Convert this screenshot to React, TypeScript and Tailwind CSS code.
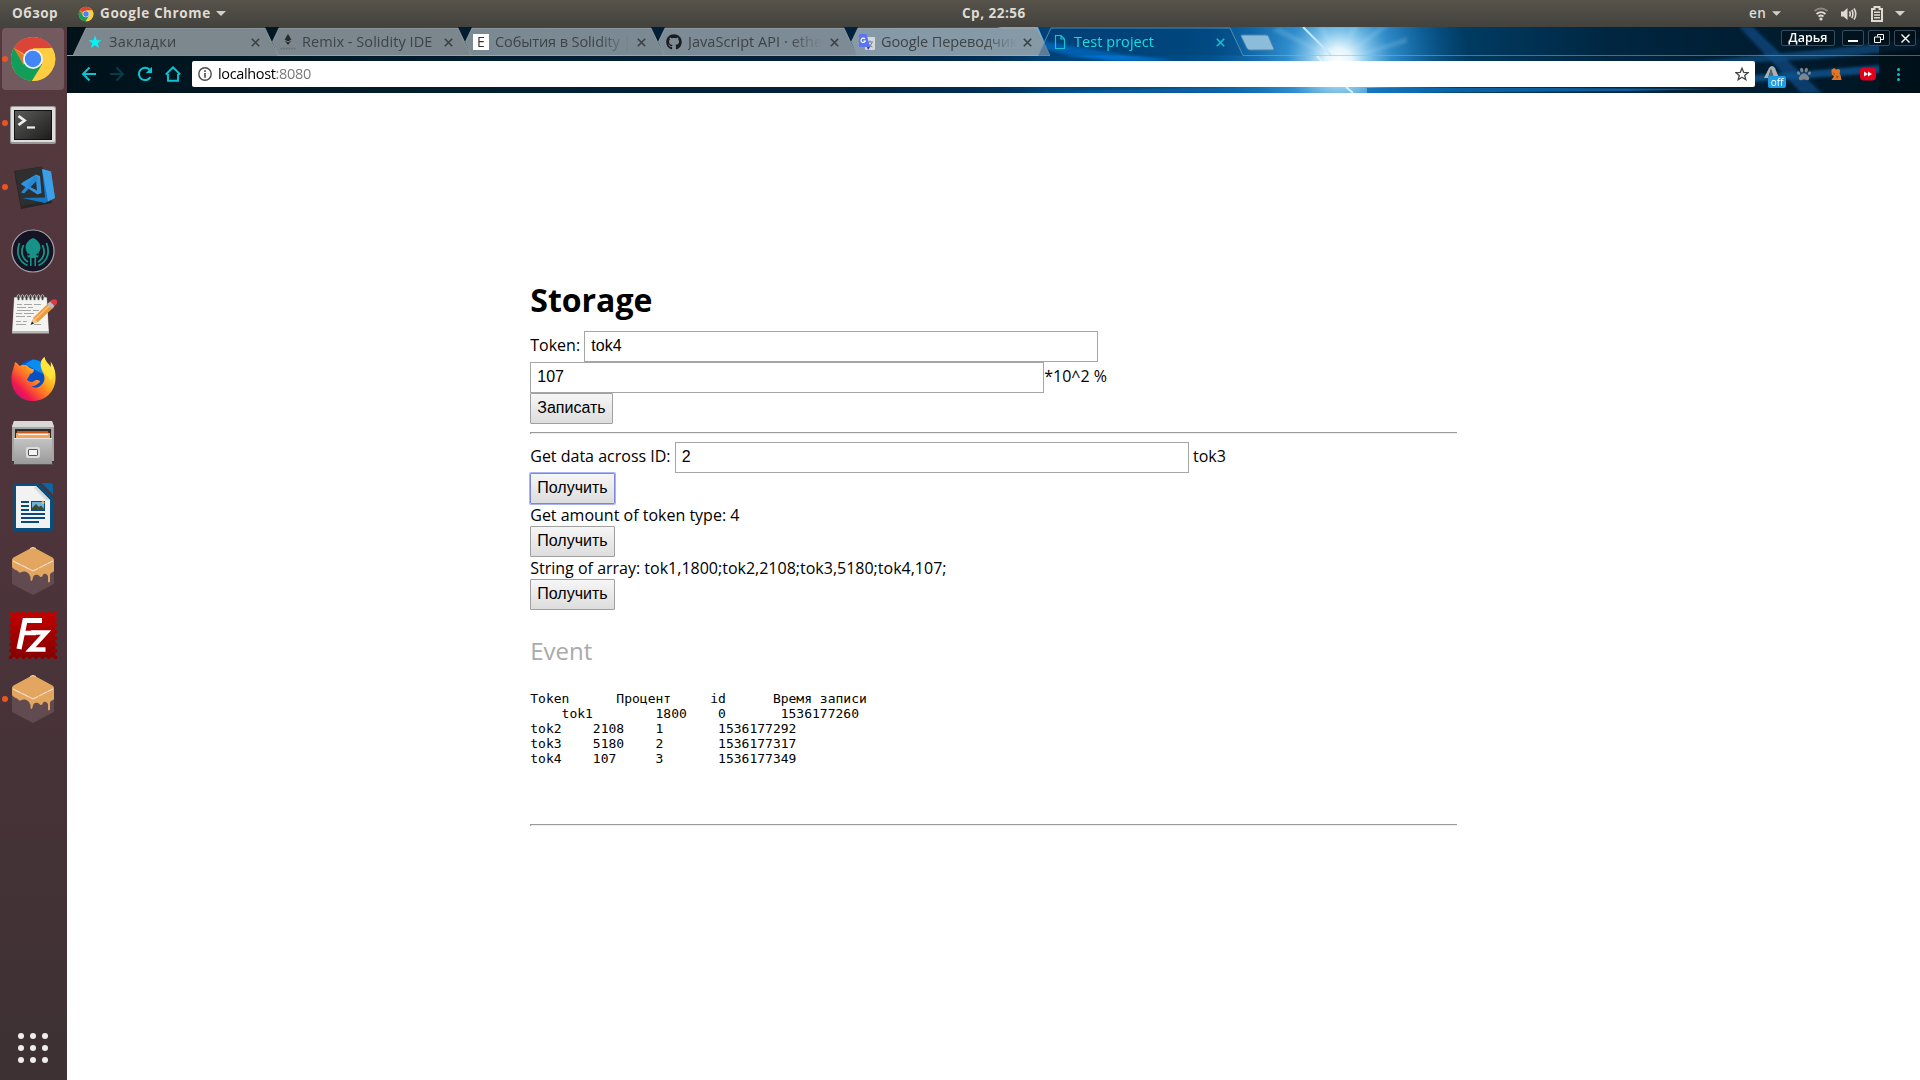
import React from "react";
import { FaGithub, FaPaw } from "react-icons/fa";

const ui = "font-['Open_Sans','Noto_Sans',sans-serif]";

function ChromeLogo({ className }: { className: string }) {
  return (
    <svg viewBox="0 0 48 48" className={className}>
      <circle cx="24" cy="24" r="22" fill="#f9c93c" />
      <path d="M24 24 L4.9 13 A22 22 0 0 1 43.1 13 L24 13.5 Z" fill="#db4437" />
      <path d="M4.9 13 A22 22 0 0 0 23 46 L33.4 29 L24 24 L14.5 29.5 Z" fill="#129d58" />
      <path d="M24 13.5 H43.6 A22 22 0 0 1 23 46 L33.5 29 Z" fill="#ffcd40" />
      <path d="M4.9 13 L14.6 29.5 L15 20 Z" fill="#c53929" opacity=".55" />
      <circle cx="24" cy="24" r="10" fill="#f1f1f1" />
      <circle cx="24" cy="24" r="8.2" fill="#4285f4" />
    </svg>
  );
}

function Terminal() {
  return (
    <svg viewBox="0 0 48 48" className="size-12">
      <defs>
        <linearGradient id="term" x1="0" y1="0" x2="1" y2="1">
          <stop offset="0" stopColor="#5b5b59" />
          <stop offset=".5" stopColor="#3c3d3b" />
          <stop offset="1" stopColor="#1c1d1c" />
        </linearGradient>
      </defs>
      <rect x="1" y="7" width="46" height="38" rx="2" fill="#989898" />
      <rect x="2" y="8" width="44" height="35" rx="1.5" fill="#dedede" />
      <rect x="5" y="11" width="38" height="30" fill="#111" />
      <rect x="6" y="12" width="36" height="28" fill="url(#term)" />
      <path d="M9.500 17 L15.500 21.500 L9.500 26" fill="none" stroke="#eee" strokeWidth="2.800" />
      <path d="M18 28.500 H26" stroke="#eee" strokeWidth="2.200" />
    </svg>
  );
}

function Code() {
  return (
    <svg viewBox="0 0 48 48" className="size-12">
      <path d="M5 8 L33 3.500 L43 40 L12 46 Z" fill="#262626" />
      <path d="M6 8 L33 3.800 L42 37 L12 43 Z" fill="#2f2f30" />
      <path d="M33 6 L42 8.500 L46 35 L36 40 L13 35 L36 34.500 Z" fill="#1477c2" />
      <path d="M33 6 L42 8.500 L46 35 L39 38.500 Z" fill="#3d9fe6" />
      <path
        d="M27 11.500 L31 13 L32.500 30 L28.500 31.500 L12 21 L15 18.500 Z M27 17 L20.500 23.500 L28 27.500 Z"
        fill="#2f93df"
        fillRule="evenodd"
      />
      <path d="M12 29.500 L27 11.500 L28.500 17 L15 30.500 Z" fill="#2787d0" />
      <path d="M15 18.500 L16.500 20.500 L21 24 L18 25 L12 21 Z" fill="#2f93df" />
    </svg>
  );
}

function Kraken() {
  return (
    <svg viewBox="0 0 48 48" className="size-12">
      <circle cx="24" cy="24" r="21" fill="#141425" stroke="#a9a3a7" strokeWidth="1.200" />
      <path
        d="M24 11 C19 13 16.500 17 16.500 21 C16.500 24 19 25 18.500 28 C18 31 21 31 21 29.500 V39 H22.600 V31 H25.400 V39 H27 V29.500 C27 31 30 31 29.500 28 C29 25 31.500 24 31.500 21 C31.500 17 29 13 24 11 Z"
        fill="#179287"
      />
      <path
        d="M10.500 16 C7 25 9 34 18.500 38.500 M14.500 18 C11.500 25 13 31 19 35 M37.500 16 C41 25 39 34 29.500 38.500 M33.500 18 C36.500 25 35 31 29 35"
        fill="none"
        stroke="#179287"
        strokeWidth="1.800"
      />
      <circle cx="19.500" cy="27.500" r="1.100" fill="#141425" />
      <circle cx="28.500" cy="27.500" r="1.100" fill="#141425" />
    </svg>
  );
}

function Notes() {
  return (
    <svg viewBox="0 0 48 48" className="size-12">
      <g transform="translate(0 -1.500)">
        <path d="M5 8 H38 L40 44 H3 Z" fill="#b9b9b5" />
        <path d="M5.500 8 H37.500 L39.500 41.500 H3.500 Z" fill="#f4f4f2" />
        {[10, 14, 18, 22, 26, 30, 34].map((x) => (
          <ellipse key={x} cx={x - 0.5} cy="8" rx="1.500" ry="2.800" fill="#3a3a3a" stroke="#dadad8" strokeWidth=".8" />
        ))}
        <path
          d="M8 15 h5 m2 0 h8 m2 0 h7 M8 18 h9 m2 0 h5 M8 21 h14 m2 0 h6 M7 24 h6 m2 0 h10 M7 27 h9 m2 0 h4 M7 32 h5 m2 0 h4 M7 35 h10 m8 0 h7"
          stroke="#a6a6a3"
          strokeWidth="1"
        />
        <path d="M22 34.500 L24.500 28 L40 13 L45 17.500 L29 32.500 Z" fill="#f19a3a" />
        <path d="M26 30 L42 14.500" stroke="#ffc27c" strokeWidth="1.500" />
        <path d="M22 35 L24.500 28.500 L28.500 32.500 Z" fill="#e7c79c" />
        <path d="M21.500 35.500 L23 32 L25 34 Z" fill="#222" />
        <path d="M38.500 14.500 L41.500 11.500 L46 16 L43 19 Z" fill="#b5bcc2" />
        <path d="M41 12 C43 9 48 9 48 12 C48.500 14 47 15.500 45.500 16.500 Z" fill="#dd3a3f" />
      </g>
    </svg>
  );
}

function Firefox() {
  return (
    <svg viewBox="0 0 48 48" className="size-12">
      <defs>
        <linearGradient id="ff" x1=".85" y1=".1" x2=".1" y2=".85">
          <stop offset="0" stopColor="#fff44f" />
          <stop offset=".35" stopColor="#ffb01d" />
          <stop offset=".6" stopColor="#ff6a2a" />
          <stop offset=".85" stopColor="#f0184f" />
          <stop offset="1" stopColor="#d8107a" />
        </linearGradient>
      </defs>
      <g transform="translate(0 -1)">
        <circle cx="24" cy="23" r="17.500" fill="#0b4fc4" />
        <path d="M24 5.500 A17 17 0 0 1 40 22 L30 18 L16 10 Z" fill="#0a8df0" />
        <path
          d="M6 8 C8 9 9.500 10.500 10.500 12 C13 10.500 16 10.500 18 11.500 C20 14 23 15 25 15.500 C25 18 23 19.500 21 20 C20 23 18.500 24 18 25.500 C20 28.500 24 28.500 26 26.500 C29 25.500 31 26.500 31 28 C29 29 28 32 22 32.500 C28 36 35.500 31 35.500 24 C35.500 19 30 14 32 8 C32.500 6 34 4 35.500 3 C36 8 40 9 41.500 13 C42 11 42 9 41.500 7.500 C45 12 47 18 46.500 25 C46 38 36 47 24 47 C11 47 2 37 2.500 24 C2.800 17 5 14 6 8 Z"
          fill="url(#ff)"
        />
        <path d="M35.500 3 C36 8 41 11 43 17 C45 22 43 26 41 26 C38 20 31 18 32 8 C32.500 6 34 4 35.500 3 Z" fill="#ffe63b" opacity=".85" />
      </g>
    </svg>
  );
}

function Files() {
  return (
    <svg viewBox="0 0 48 48" className="size-12">
      <defs>
        <linearGradient id="fl" x1="0" y1="0" x2="0" y2="1">
          <stop offset="0" stopColor="#c4c4c4" />
          <stop offset="1" stopColor="#9a9a9a" />
        </linearGradient>
      </defs>
      <path d="M5 2 H43 L45 7 V42 H3 V7 Z" fill="#a5a5a3" />
      <path d="M5 2 H43 L45 8 H3 Z" fill="#d9d9d7" />
      <rect x="6" y="10" width="36" height="12" fill="#2c2a29" />
      <path d="M8 12 H39 L41 20 H7 Z" fill="#c75a1b" />
      <path d="M7 14 H41 V19 H7 Z" fill="#f2a45d" />
      <path d="M9 15.500 H39" stroke="#fff1df" strokeWidth="1.200" />
      <rect x="5" y="19" width="38" height="26" fill="url(#fl)" />
      <path d="M5 19.500 H43" stroke="#e6e6e6" />
      <path d="M4 45.500 H44" stroke="#5b5255" />
      <rect x="17" y="28" width="14" height="11" rx="2" fill="#dcdcdc" />
      <rect x="19.500" y="30.500" width="9" height="6" rx=".6" fill="#f3f3f3" stroke="#555" />
    </svg>
  );
}

function Writer() {
  return (
    <svg viewBox="0 0 48 48" className="size-12">
      <path d="M6 0 H31 L44 13 V46 Q44 48 42 48 H6 Q4 48 4 46 V2 Q4 0 6 0 Z" fill="#084f80" />
      <path d="M31 0 H42 Q44 0 44 2 V13 Z" fill="#0a65a3" />
      <path d="M30 -1 L45 14" stroke="#4a3338" strokeWidth="2" />
      <path d="M7 3 H27 L41 17 V45 H7 Z" fill="#f2f2f2" />
      <path d="M27 3 L41 17 L37 17.500 L25 5 Z" fill="#dadada" />
      <path d="M12 19 h8 M12 23 h8 M12 27 h8 M12 31 h24 M12 35 h24 M12 39 h18" stroke="#0b4a78" strokeWidth="2" />
      <rect x="22" y="18" width="14" height="10" fill="#0b4a78" />
      <rect x="23" y="19" width="12" height="8" fill="#6fb3dc" />
      <path d="M23 27 V25 L27 21 L30 24 L32 22.500 L35 26 V27 Z" fill="#3f4a33" />
      <circle cx="34" cy="19.500" r="1.500" fill="#e2c34b" />
    </svg>
  );
}

function Cube() {
  return (
    <svg viewBox="0 0 48 48" className="size-12">
      <path d="M3 12 L24 22 L45 12 V36 Q45 37 44 37.500 L24 48 L4 37.500 Q3 37 3 36 Z" fill="#614a50" />
      <path
        d="M24 0 L43.500 10.500 Q45 11.500 45 13 V24.500 C44 24.500 42 26 41 27 V34.500 Q40 36.500 39 34.500 V29 C36 25 34 27 33.500 29 C32 31.500 30.500 29 29 28 C26 27 24 28 23.500 32.500 Q22.500 35 21.500 33 V30 C20 25 16 24 14 24.500 C12 25.500 10 26.500 9 24 C7 23 4 22 3 20 V13 Q3 11.500 4.500 10.500 Z"
        fill="#e3a660"
      />
      <path d="M4 14 L24 24 L44 14" fill="none" stroke="#f5e2ca" strokeWidth="1.100" strokeDasharray="9 .6" />
      <path d="M21 1.500 L24 .5 L27 1.500" fill="none" stroke="#f3d9bb" />
    </svg>
  );
}

function FileZilla() {
  const marks = [5, 11.3, 17.6, 24, 30.4, 36.7, 43];
  return (
    <svg viewBox="0 0 48 48" className="size-12">
      <defs>
        <linearGradient id="fz" x1="0" y1="0" x2="0" y2="1">
          <stop offset="0" stopColor="#c40000" />
          <stop offset="1" stopColor="#850000" />
        </linearGradient>
      </defs>
      <path d="M0 0 H48 V48 H0 Z" fill="url(#fz)" />
      {marks.map((m) => (
        <g key={m} fill="#4b353b">
          <circle cx={m} cy="0" r="2" />
          <circle cx={m} cy="48" r="2" />
          <circle cx="0" cy={m} r="2" />
          <circle cx="48" cy={m} r="2" />
        </g>
      ))}
      <path d="M10 38 L16 9.500 H33" fill="none" stroke="#fff" strokeWidth="5.200" />
      <path d="M13 22 H27" stroke="#fff" strokeWidth="4.500" />
      <path d="M22 21.500 H37 L21.500 38.500 H36.500" fill="none" stroke="#fff" strokeWidth="4.600" />
    </svg>
  );
}

const dock = [
  { icon: <ChromeLogo className="size-12" />, active: true, dot: true },
  { icon: <Terminal />, dot: true },
  { icon: <Code />, dot: true },
  { icon: <Kraken /> },
  { icon: <Notes /> },
  { icon: <Firefox /> },
  { icon: <Files /> },
  { icon: <Writer /> },
  { icon: <Cube /> },
  { icon: <FileZilla /> },
  { icon: <Cube />, dot: true },
];

function Dock() {
  return (
    <aside className="flex w-[67px] flex-col justify-between bg-linear-to-b from-[#55393f] via-[#4c343a] to-[#3d3133]">
      <div>
        {dock.map((d, i) => (
          <div key={i} className="relative flex h-16 items-center pl-[2px]">
            {d.dot && <span className="absolute left-[2px] size-[6px] rounded-full bg-[#e95420]" />}
            <div className={d.active ? "flex h-[62px] w-[62px] items-center justify-center rounded bg-[#735a5f]" : "flex w-[62px] justify-center"}>
              {d.icon}
            </div>
          </div>
        ))}
      </div>
      <div className="mb-[17px] ml-[18px] grid w-[30px] grid-cols-3 gap-[6px]">
        {Array.from({ length: 9 }, (_, i) => (
          <span key={i} className="size-[6px] rounded-full bg-[#eeeeec]" />
        ))}
      </div>
    </aside>
  );
}

function Caret({ className }: { className: string }) {
  return (
    <svg viewBox="0 0 10 5" className={className}>
      <path d="M0 0 H10 L5 5 Z" fill="#d3d1cc" />
    </svg>
  );
}

function TopBar() {
  return (
    <header className={`${ui} grid h-[27px] grid-cols-3 items-center bg-linear-to-b from-[#57534b] to-[#43423d] text-[13.5px] leading-none font-bold text-[#dfdbd2]`}>
      <div className="flex items-center">
        <span className="ml-[12px] w-[66px] tracking-[0.5px]">Обзор</span>
        <ChromeLogo className="size-4" />
        <span className="ml-[6px] w-[116px] tracking-[0.6px]">Google Chrome</span>
        <Caret className="h-[5px] w-[10px]" />
      </div>
      <div className="pl-[322px] tracking-[0.5px]">Ср, 22:56</div>
      <div className="flex items-center justify-end pr-[15px]">
        <span className="w-[23px] font-semibold tracking-[0.5px]">en</span>
        <Caret className="mr-[33px] h-[5px] w-[9px]" />
        <svg viewBox="0 0 14 14" className="mr-[13px] h-[14px] w-[14px]" fill="none" strokeWidth="1.800">
          <path d="M.5 4 Q7 -1 13.500 4" stroke="#8b8984" />
          <path d="M2.500 7 Q7 3.300 11.500 7" stroke="#dfdbd2" />
          <path d="M4.500 9.500 Q7 7.500 9.500 9.500" stroke="#dfdbd2" />
          <circle cx="7" cy="12" r="1.600" fill="#dfdbd2" />
        </svg>
        <svg viewBox="0 0 16 14" className="mr-[14px] h-[14px] w-[16px]" fill="none" stroke="#dfdbd2" strokeWidth="1.600">
          <path d="M0 4.500 H2.500 L6.500 1 V13 L2.500 9.500 H0 Z" fill="#dfdbd2" stroke="none" />
          <path d="M8.500 4.500 Q10 7 8.500 9.500 M10.800 3 Q13 7 10.800 11 M13 1.500 Q16.500 7 13 12.500" />
        </svg>
        <svg viewBox="0 0 12 16" className="mr-[12px] h-[16px] w-[12px]" fill="none" stroke="#dfdbd2" strokeWidth="2">
          <path d="M1 3 H3.500 V1 H8.500 V3 H11 V15 H1 Z" />
          <path d="M3 6.300 H9 M3 9 H9 M3 11.700 H9" strokeWidth="1.400" />
        </svg>
        <Caret className="h-[5px] w-[10px]" />
      </div>
    </header>
  );
}

function ThemeBackdrop() {
  return (
    <svg viewBox="0 0 1853 66" preserveAspectRatio="none" className="absolute inset-0 h-[66px] w-[1853px]">
      <defs>
        <linearGradient id="sky">
          <stop offset="0" stopColor="#00121a" />
          <stop offset=".2" stopColor="#001d2d" />
          <stop offset=".42" stopColor="#00223a" />
          <stop offset=".5" stopColor="#002f58" />
          <stop offset=".53" stopColor="#004379" />
          <stop offset=".6" stopColor="#004a82" />
          <stop offset=".65" stopColor="#0a5e9e" />
          <stop offset=".7" stopColor="#0a5f9f" />
          <stop offset=".74" stopColor="#013f68" />
          <stop offset=".83" stopColor="#002742" />
          <stop offset="1" stopColor="#00131f" />
        </linearGradient>
        <radialGradient id="sun" gradientUnits="userSpaceOnUse" cx="1272" cy="34" r="130">
          <stop offset="0" stopColor="#fff" />
          <stop offset=".1" stopColor="#e4f5fc" />
          <stop offset=".22" stopColor="#8fcdef" stopOpacity=".95" />
          <stop offset=".4" stopColor="#3f9fdc" stopOpacity=".75" />
          <stop offset=".7" stopColor="#1d7dc2" stopOpacity=".4" />
          <stop offset="1" stopColor="#1270b5" stopOpacity="0" />
        </radialGradient>
        <filter id="soft" x="-10%" y="-50%" width="120%" height="200%">
          <feGaussianBlur stdDeviation="1.500" />
        </filter>
      </defs>
      <rect width="1853" height="66" fill="url(#sky)" />
      <path d="M930 0 H971 L977 14 L955 6 Z" fill="#4da5e0" />
      <g filter="url(#soft)">
        <path d="M970 13 L1010 20 L1060 28 L1110 34 H1045 L1005 29 L976 22 Z" fill="#0670cc" />
        <path d="M950 66 Q1200 58 1260 60 V66 Z" fill="#0d6cb5" opacity=".7" />
      </g>
      <rect x="1135" width="280" height="66" fill="url(#sun)" />
      <g filter="url(#soft)" fill="#bfe6fa" opacity=".18">
        <path d="M1272 34 L1250 0 H1258 Z" />
        <path d="M1272 34 L1284 0 H1292 Z" />
        <path d="M1272 34 L1312 0 H1322 Z" />
        <path d="M1272 34 L1205 4 L1212 0 Z" />
        <path d="M1272 34 L1340 10 V16 Z" />
      </g>
      <path d="M1236 0 L1264 28" stroke="#c5e8fa" strokeWidth="2" fill="none" />
      <path d="M1250 29 L1256 35 M1279 60 L1286 66" stroke="#d8f1fc" strokeWidth="2" />
      <path d="M1300 61 L1480 61 L1653 62 L1560 64 L1300 66 Z" fill="#0d6cb5" opacity=".8" />
      <g filter="url(#soft)">
        <path d="M1672 0 L1686 0 L1755 66 H1734 Z" fill="#0a4d87" opacity=".7" />
        <path d="M1600 37 L1780 20 L1853 12 V22 L1750 32 L1600 40 Z" fill="#0b4c82" opacity=".75" />
        <path d="M1640 52 L1813 38 V46 L1660 57 Z" fill="#0c5591" opacity=".8" />
      </g>
      <rect x="1812" width="41" height="66" fill="#001018" opacity=".75" />
    </svg>
  );
}

function CloseX({ color }: { color: string }) {
  return (
    <svg viewBox="0 0 9 9" className="size-[9px]">
      <path d="M.8 .8 L8.200 8.200 M8.200 .8 L.8 8.200" stroke={color} strokeWidth="1.600" />
    </svg>
  );
}

const fade = "mask-r-from-75% mask-r-to-100% text-[#3d4346]";

const tabs = [
  {
    title: "Закладки",
    text: "tracking-[0.25px] text-[#3d4346]",
    z: "z-[5]",
    fill: "#7c888d",
    icon: (
      <svg viewBox="0 0 14 14" className="ml-px size-[14px]">
        <path d="M7 .5 L8.700 5.200 H13.500 L9.700 8.200 L11.200 13 L7 10.200 L2.800 13 L4.300 8.200 L.5 5.200 H5.300 Z" fill="#00f4f8" />
      </svg>
    ),
  },
  {
    title: "Remix - Solidity IDE",
    text: "tracking-[0.05px] text-[#3d4346]",
    z: "z-[4]",
    fill: "#7b878d",
    icon: (
      <svg viewBox="0 0 16 16" className="size-4">
        <path d="M8 0 L11.300 5.500 L8 7.500 L4.700 5.500 Z M4.700 6.500 L8 8.400 L11.300 6.500 L8 11 Z" fill="#26292b" />
        <path d="M.5 14.500 H15.500" stroke="#666e73" strokeWidth="1.600" strokeDasharray="1.800 .9" />
      </svg>
    ),
  },
  {
    title: "События в Solidity |",
    text: `tracking-[-0.1px] ${fade}`,
    z: "z-[3]",
    fill: "#7b8992",
    icon: (
      <span className="flex size-4 items-center justify-center bg-white font-['Open_Sans',sans-serif] text-[14px] leading-none text-[#333]">E</span>
    ),
  },
  {
    title: "JavaScript API · ethe",
    text: `tracking-[0.05px] ${fade}`,
    z: "z-[2]",
    fill: "#7c8b95",
    icon: <FaGithub className="size-4 text-[#1b1c1e]" />,
  },
  {
    title: "Google Переводчик",
    text: `tracking-[-0.1px] ${fade}`,
    z: "z-[1]",
    fill: "#8599a6",
    icon: (
      <svg viewBox="0 0 16 16" className="size-4">
        <rect x="6" y="3" width="10" height="13" rx="1" fill="#d5d9de" />
        <path d="M8 8 h6 M11 6.500 v1.500 M9 9 q2 4 4.500 4 M13 8.500 q-1 4 -4 5" stroke="#6e8087" fill="none" />
        <path d="M1 0 H7.500 L11 13 H1 Q0 13 0 12 V1 Q0 0 1 0 Z" fill="#5b74f5" />
        <path d="M8 13 H11 L9 16 Z" fill="#3b28b8" />
        <path d="M6 5 A2.200 2.200 0 1 0 6.300 7 H4.500" stroke="#fff" strokeWidth="1.100" fill="none" />
      </svg>
    ),
  },
  {
    title: "Test project",
    text: "tracking-[0.05px] text-[#13dfe6]",
    z: "z-[6]",
    fill: "",
    icon: (
      <svg viewBox="0 0 16 16" className="size-4" fill="none" stroke="#12c5d2" strokeWidth="1.200">
        <path d="M3.500 1.500 H9 L12.500 5 V14.500 H3.500 Z M9 1.500 V5 H12.500" />
      </svg>
    ),
  },
];

function Tabs() {
  return (
    <div className="relative flex h-[29px] items-start pl-[6px]">
      {tabs.map((t, i) => {
        const active = !t.fill;
        return (
          <div key={t.title} className={`relative -mr-3 flex h-[29px] w-[205px] items-center ${t.z}`}>
            <svg viewBox="0 0 205 29" className="absolute inset-0 h-[29px] w-[205px]">
              <path
                d={i === 0 || active ? "M0 28.500 L13 1 H192 L205 28.500" : "M6.500 14.500 L13 1 H192 L205 28.500 H12.500 Z"}
                fill={active ? "#003d72" : t.fill}
                fillOpacity={active ? 0.3 : 1}
                stroke={active ? "#6ba0c2" : "#aab6bb"}
                strokeOpacity={active ? 0.75 : 0.6}
              />
            </svg>
            <div className="relative flex flex-1 items-center pt-[1px]">
              <span className="ml-[14px] flex w-[22px] items-center">{t.icon}</span>
              <span className="flex w-[142px] pb-[1px]">
                <span className={`text-[14.5px] leading-5 whitespace-nowrap ${t.text}`}>{t.title}</span>
              </span>
              <CloseX color={active ? "#13c5cf" : "#3b4043"} />
            </div>
          </div>
        );
      })}
      <svg viewBox="0 0 36 17" className="mt-[7px] ml-[9px] h-[17px] w-[36px]">
        <path d="M1.500 1 H26 Q28 1 28.500 2.500 L34 15 Q34.300 16 33 16 H10 Q8 16 7 14.500 L1 2 Z" fill="#8bbcd9" stroke="#4c86ab" />
      </svg>
    </div>
  );
}

function WindowButtons() {
  const box = "flex h-4 items-center justify-center rounded-[2px] border border-[#3c4b57] bg-[#00101a]/60";
  return (
    <div className="absolute top-[3px] right-[4px] flex text-white">
      <span className={`${box} mr-[7px] w-[54px] text-[12.5px] leading-none font-semibold`}>Дарья</span>
      <span className={`${box} mr-[4px] w-[22px]`}>
        <span className="mt-[5px] h-[2px] w-[10px] bg-white" />
      </span>
      <span className={`${box} mr-[4px] w-[22px]`}>
        <svg viewBox="0 0 10 9" className="h-[9px] w-[10px]" fill="none" stroke="#fff">
          <path d="M3.500 2.500 V.5 H9.500 V5.500 H7" />
          <path d="M.5 3 H6.500 V8.500 H.5 Z" />
        </svg>
      </span>
      <span className={`${box} w-[22px]`}>
        <svg viewBox="0 0 9 9" className="size-[9px]">
          <path d="M.5 .5 L8.500 8.500 M8.500 .5 L.5 8.500" stroke="#fff" strokeWidth="1.400" />
        </svg>
      </span>
    </div>
  );
}

function Toolbar() {
  const nav = "size-4 shrink-0";
  return (
    <div className="relative flex h-[37px] items-center pb-[1px]">
      <div className="flex w-[125px] items-center gap-[12px] pl-[14px]">
        <svg viewBox="0 0 16 16" className={nav} fill="none" stroke="#07c5d2" strokeWidth="2">
          <path d="M15 8 H2 M8.500 1.500 L2 8 L8.500 14.500" />
        </svg>
        <svg viewBox="0 0 16 16" className={nav} fill="none" stroke="#053c47" strokeWidth="2">
          <path d="M1 8 H14 M7.500 1.500 L14 8 L7.500 14.500" />
        </svg>
        <svg viewBox="0 0 16 16" className={nav} fill="none" stroke="#07c5d2" strokeWidth="2">
          <path d="M13.500 11 A6.200 6.200 0 1 1 12.600 3.600" />
          <path d="M15 .8 V7 H8.800 Z" fill="#07c5d2" stroke="none" />
        </svg>
        <svg viewBox="0 0 16 16" className={nav} fill="none" stroke="#07c5d2" strokeWidth="1.900">
          <path d="M.8 8.500 L8 1.300 L15.200 8.500 M3 8 V14.800 H13 V8" />
        </svg>
      </div>
      <div className="flex h-[26px] w-[1563px] items-center rounded-[2px] bg-white pr-[6px] pl-[6px]">
        <svg viewBox="0 0 14 14" className="size-[14px]">
          <circle cx="7" cy="7" r="6.200" fill="none" stroke="#4a4a4a" strokeWidth="1.400" />
          <path d="M7 6 V10.700 M7 3.200 V4.900" stroke="#4a4a4a" strokeWidth="1.600" />
        </svg>
        <span className="ml-[6px] flex-1 text-[14.5px] leading-5 tracking-[-0.35px] text-black">
          localhost<span className="text-[#7a7a7a]">:8080</span>
        </span>
        <svg viewBox="0 0 14 14" className="size-[14px]">
          <path d="M7 1.200 L8.700 5.300 L13.100 5.600 L9.700 8.400 L10.800 12.700 L7 10.300 L3.200 12.700 L4.300 8.400 L.9 5.600 L5.300 5.300 Z" fill="none" stroke="#454545" strokeWidth="1.300" />
        </svg>
      </div>
      <div className="relative ml-[9px] size-[20px]">
        <svg viewBox="0 0 20 20" className="size-5">
          <path d="M0 14 L5 4 Q8 0 11 4 L15 14 H10 L7 5 L4 14 Z" fill="#a8b0b5" />
          <path d="M7 5 L10 14 H4 Z" fill="#5d666c" />
        </svg>
        <span className="absolute top-[12px] left-[4px] flex h-[12px] w-[18px] items-center justify-center rounded-[2px] bg-[#1f9ce4] text-[10px] leading-none text-white">off</span>
      </div>
      <FaPaw className="ml-[13px] size-[14px] text-[#7d868c]" />
      <svg viewBox="0 0 12 13" className="ml-[19px] h-[12px] w-[12px]">
        <path d="M1 2 L4 0 L6 1.500 L9 1 L10.500 2.500 L10 6 L11 8 L12 13 H1 L4 9 L1.500 7 Z" fill="#e27625" />
        <path d="M3 5 L5 6 L4 7.500 Z M6 8 L9 9 L7 12 Z" fill="#a1470e" />
      </svg>
      <svg viewBox="0 0 16 14" className="ml-[18px] h-[14px] w-[16px]">
        <rect width="16" height="13" rx="4" y=".5" fill="#e2001c" />
        <path d="M4 4.500 L8 7 L4 9.500 Z M8 4.500 L12 7 L8 9.500 Z" fill="#fff" />
      </svg>
      <div className="ml-[21px] flex flex-col gap-[2px]">
        <span className="size-[3px] rounded-full bg-[#07c5d2]" />
        <span className="size-[3px] rounded-full bg-[#07c5d2]" />
        <span className="size-[3px] rounded-full bg-[#07c5d2]" />
      </div>
    </div>
  );
}

function Field({ value }: { value: string }) {
  return (
    <input
      readOnly
      value={value}
      className="h-[31px] w-[514px] border border-[#a6a6a6] bg-white px-[6px] pb-[1px] font-['Liberation_Sans',sans-serif] text-[16px] outline-none"
    />
  );
}

function Btn({ children, focused }: { children: React.ReactNode; focused?: boolean }) {
  return (
    <button
      className={`block h-[31px] rounded-[1px] border bg-linear-to-b from-[#f6f6f6] to-[#dddddd] px-[6px] pb-[1px] font-['Liberation_Sans',sans-serif] text-[16px] leading-none ${focused ? "border-[#7b87d8] shadow-[0_0_0_1px_#a9b4f5]" : "border-[#a0a0a0]"}`}
    >
      {children}
    </button>
  );
}

function Rule() {
  return <div className="h-[2px] border-t border-l border-t-[#9a9a9a] border-l-[#9a9a9a] bg-[#eeeeee]" />;
}

const log = `Token      Процент     id      Время записи
    tok1        1800    0       1536177260
tok2    2108    1       1536177292
tok3    5180    2       1536177317
tok4    107     3       1536177349`;

function Page() {
  return (
    <main className="flex-1 bg-white pt-[185px] pl-[463.250px] font-['Open_Sans',sans-serif] text-[16px] leading-[22px] text-black">
      <div className="w-[926.500px]">
        <h1 className="mb-[9px] h-[44px] text-[32px] leading-[44px] font-bold">Storage</h1>
        <div className="flex h-[31px] items-center gap-[4.200px]">
          <span className="pb-[4px]">Token:</span>
          <Field value="tok4" />
        </div>
        <div className="flex h-[31px] items-center">
          <Field value="107" />
          <span className="pb-[4px]">*10^2 %</span>
        </div>
        <Btn>Записать</Btn>
        <div className="py-2">
          <Rule />
        </div>
        <div className="flex h-[31px] items-center gap-[4.200px]">
          <span className="pb-[4px]">Get data across ID:</span>
          <Field value="2" />
          <span className="pb-[4px]">tok3</span>
        </div>
        <Btn focused>Получить</Btn>
        <p>Get amount of token type: 4</p>
        <Btn>Получить</Btn>
        <p>String of array: tok1,1800;tok2,2108;tok3,5180;tok4,107;</p>
        <Btn>Получить</Btn>
        <h2 className="mt-[24px] text-[24px] leading-[33px] text-[#aaaaaa]">Event</h2>
        <pre className="mt-[24px] h-[133px] font-['DejaVu_Sans_Mono',monospace] text-[13px] leading-[15px]">{log}</pre>
        <Rule />
      </div>
    </main>
  );
}

export default function App() {
  return (
    <div className="flex h-[1080px] w-[1920px] flex-col overflow-hidden">
      <TopBar />
      <div className="flex flex-1">
        <Dock />
        <div className="flex flex-1 flex-col">
          <div className={`${ui} relative h-[66px] overflow-hidden bg-[#00131c]`}>
            <ThemeBackdrop />
            <Tabs />
            <div className="absolute top-[28px] left-0 h-px w-[971px] bg-[#8e9da5]" />
            <div className="absolute top-[28px] right-0 h-px w-[677px] bg-[#8fb3c8]/50" />
            <WindowButtons />
            <Toolbar />
          </div>
          <Page />
        </div>
      </div>
    </div>
  );
}
